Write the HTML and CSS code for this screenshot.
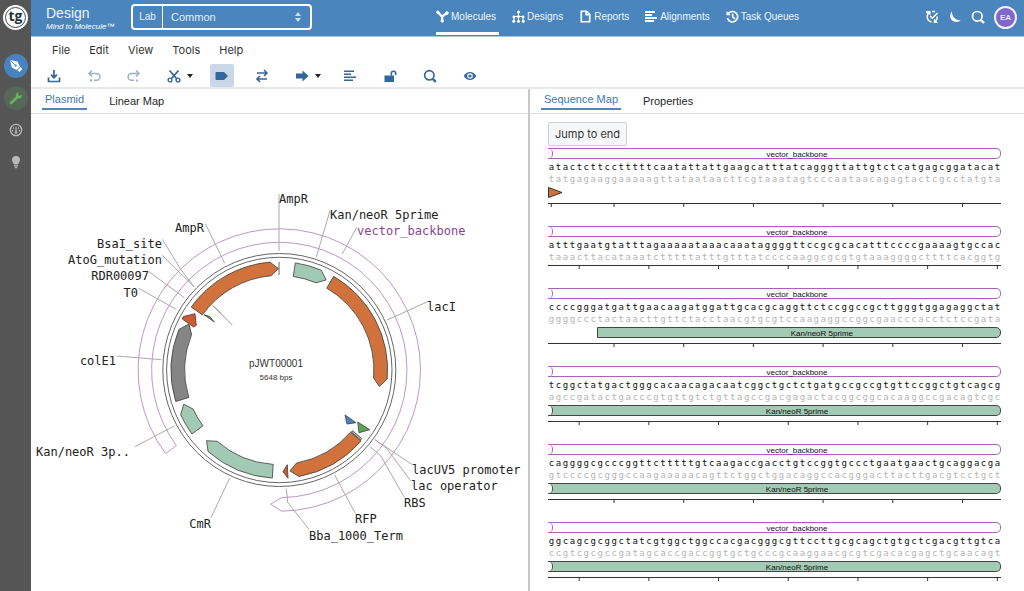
FILE: index.html
```html
<!DOCTYPE html>
<html lang="en">
<head>
<meta charset="utf-8">
<meta name="viewport" content="width=device-width, initial-scale=1">
<title>Design - pJWT00001</title>
<link rel="stylesheet" href="styles.css">
</head>
<body>
<div class="app">
  <aside class="sidebar">
    <a class="logo" href="#" aria-label="Home">tg</a>
    <a class="side-link side-design" href="#" aria-label="Design">
      <svg width="14" height="14" viewBox="0 0 14 14"><path d="M1 1l7.500 1.600 2.500 4.800-3.200 3.700L2.800 8.500z" fill="#fff"/><path d="M11.600 8l1.600 1.900-2.700 3-2-1.300z" fill="#fff"/><path d="M1.500 1.500l4.500 4.500" stroke="#4683c0" stroke-width=".9"/><circle cx="6.700" cy="6.700" r="1.100" fill="#4683c0"/></svg>
    </a>
    <a class="side-link side-build" href="#" aria-label="Build">
      <svg width="14" height="14" viewBox="0 0 14 14"><path d="M2 12L8 6.300" stroke="#67b556" stroke-width="2.600" stroke-linecap="round"/><path d="M12.700 3.400L10.600 5 8.900 3.900 9.500 1.300C7.400 1.600 6.300 3.500 7 5.500l1.800 1.900c2.400.500 4.600-1.500 3.900-4z" fill="#67b556"/></svg>
    </a>
    <a class="side-link" href="#" aria-label="Dashboard">
      <svg width="14" height="14" viewBox="0 0 14 14" fill="none" stroke="#b9b9b9"><circle cx="7" cy="7" r="5.600" stroke-width="1.400"/><path d="M7 9V4M4.600 4.500v1.200M9.400 4.500v1.200M3.600 7v1.500M10.400 7v1.500" stroke-width="1.200"/><circle cx="7" cy="9.500" r="1.300" fill="#b9b9b9" stroke="none"/></svg>
    </a>
    <a class="side-link" href="#" aria-label="Tips">
      <svg width="14" height="14" viewBox="0 0 14 14" fill="#b9b9b9"><path d="M7 1a4 4 0 0 0-4 4c0 2 1.500 2.700 1.900 4.500h4.200C9.500 7.700 11 7 11 5a4 4 0 0 0-4-4zM5 10.200h4v1.200H5zM5.500 12h3l-.7 1.200H6.200z"/></svg>
    </a>
  </aside>

  <div class="main">
    <header class="topbar">
      <div class="brand">
        <span class="brand-name">Design</span>
        <span class="brand-tag">Mind to Molecule™</span>
      </div>
      <div class="lab">
        <label class="lab-label" for="lab">Lab</label>
        <select class="lab-select" id="lab"><option>Common</option></select>
        <svg class="lab-arrows" width="8" height="10" viewBox="0 0 8 10" fill="#cfe0f0"><path d="M1 4l3-4 3 4zM1 6l3 4 3-4z"/></svg>
      </div>
      <nav class="nav">
        <a class="nav-link nav-active" href="#"><svg width="13" height="13" viewBox="0 0 13 13" fill="#fff" stroke="#fff"><path d="M2 2.500l4 4L11 3M6.200 6.500V11" stroke-width="2.200" fill="none"/><circle cx="1.900" cy="2.300" r="1.300"/><circle cx="11" cy="3" r="1.300"/><circle cx="6.200" cy="11" r="1.200"/></svg>Molecules</a>
        <a class="nav-link" href="#"><svg width="13" height="13" viewBox="0 0 13 13" fill="#fff"><path d="M6 2h1v9H6zM2 6h9v1H2zM1.500 6h1v5h-1zM10.500 6h1v5h-1z"/><circle cx="6.500" cy="2" r="1.500"/><circle cx="6.500" cy="6.500" r="1.500"/><circle cx="1.900" cy="7" r="1.400"/><circle cx="11.100" cy="7" r="1.400"/><circle cx="1.700" cy="11.200" r="1.500"/><circle cx="6.500" cy="11.200" r="1.500"/><circle cx="11.300" cy="11.200" r="1.500"/></svg>Designs</a>
        <a class="nav-link" href="#"><svg width="13" height="13" viewBox="0 0 13 13" fill="none" stroke="#fff" stroke-width="1.600"><path d="M2.300 1.200h5.200l3.200 3.200v7.400H2.300zM7.200 1.200v3.500h3.500"/></svg>Reports</a>
        <a class="nav-link" href="#"><svg width="13" height="13" viewBox="0 0 13 13" fill="#fff"><path d="M0 1h10v2H0zM0 4h7v2H0zM0 7h12v2H0zM0 10h9v2H0z"/></svg>Alignments</a>
        <a class="nav-link" href="#"><svg width="13" height="13" viewBox="0 0 13 13" fill="none" stroke="#fff" stroke-width="1.600"><path d="M2 4a5.200 5.200 0 1 1-.6 4M6.700 3.500v3.300l2.300 2"/><path d="M.5 1v4.200h4.200z" fill="#fff" stroke="none"/></svg>Task Queues</a>
      </nav>
      <div class="actions">
        <button class="action" aria-label="Refresh tasks"><svg width="14" height="14" viewBox="0 0 14 14" fill="none" stroke="#fff" stroke-width="1.500"><path d="M5 2.300A5.200 5.200 0 0 0 6.500 12M3.500 4L1 1.500M9 12a5 5 0 0 0 3-5.500M7 1.500h3M5 6l2.300 2.300L12.500 3"/><path d="M1 1h4.500v4.500zM13 13H8.500l.8-4.500z" fill="#fff" stroke="none"/></svg></button>
        <button class="action" aria-label="Dark mode"><svg width="14" height="14" viewBox="0 0 14 14" fill="#fff"><path d="M4 1.200a6.300 6.300 0 1 0 9 8.800C8.500 11.300 3.500 7 4 1.200z"/></svg></button>
        <button class="action" aria-label="Search"><svg width="14" height="14" viewBox="0 0 14 14" fill="none" stroke="#fff"><circle cx="6.300" cy="6.300" r="4.800" stroke-width="1.700"/><path d="M9.800 9.800l3.200 3.200" stroke-width="2.400"/></svg></button>
        <button class="avatar" aria-label="Account">EA</button>
      </div>
    </header>

    <div class="tools">
      <div class="menubar">
        <button class="menu">File</button><button class="menu">Edit</button><button class="menu">View</button><button class="menu">Tools</button><button class="menu">Help</button>
      </div>
      <div class="toolbar">
        <button class="tool" aria-label="Save"><svg width="14" height="14" viewBox="0 0 14 14" fill="none" stroke="#336699" stroke-width="1.700"><path d="M7 1v7M4 5.700l3 3 3-3M1.500 8.500v4h11v-4"/></svg></button>
        <button class="tool tool-off" aria-label="Undo"><svg width="14" height="14" viewBox="0 0 14 14" fill="none" stroke="#336699" stroke-width="1.500"><path d="M5 1.500L2 4.500l3 3M2.500 4.500h7a3.400 3.400 0 0 1 0 6.800H7"/><path d="M3 10.500h2v2H3z" fill="#336699" stroke="none"/></svg></button>
        <button class="tool tool-off" aria-label="Redo"><svg width="14" height="14" viewBox="0 0 14 14" fill="none" stroke="#336699" stroke-width="1.500"><path d="M9 1.500l3 3-3 3M11.500 4.500h-7a3.400 3.400 0 0 0 0 6.800H7"/><path d="M9 10.500h2v2H9z" fill="#336699" stroke="none"/></svg></button>
        <div class="tool-group">
          <button class="tool" aria-label="Cut"><svg width="14" height="14" viewBox="0 0 14 14" fill="none" stroke="#336699"><path d="M2.500 1.500l7 8M11.500 1.500l-7 8" stroke-width="1.800"/><circle cx="3" cy="11" r="1.900" stroke-width="1.400"/><circle cx="11" cy="11" r="1.900" stroke-width="1.400"/></svg></button>
          <button class="caret" aria-label="Cut options"><svg width="6" height="4" viewBox="0 0 6 4"><path d="M0 0h6L3 4z" fill="#222"/></svg></button>
        </div>
        <button class="tool tool-on" aria-label="Show features"><svg width="14" height="14" viewBox="0 0 14 14" fill="#336699"><path d="M1.500 3H9l4 4-4 4H1.500a1 1 0 0 1-1-1V4a1 1 0 0 1 1-1z"/></svg></button>
        <button class="tool" aria-label="Show translations"><svg width="14" height="14" viewBox="0 0 14 14" fill="none" stroke="#336699" stroke-width="1.600"><path d="M2 4h10M9 1l3 3-3 3M12 10H2M5 7l-3 3 3 3"/></svg></button>
        <div class="tool-group">
          <button class="tool" aria-label="Show open reading frames"><svg width="14" height="14" viewBox="0 0 14 14" fill="#336699"><path d="M1 4.500h6.500v-3L13.500 7l-6 5.500v-3H1z"/></svg></button>
          <button class="caret" aria-label="Frame options"><svg width="6" height="4" viewBox="0 0 6 4"><path d="M0 0h6L3 4z" fill="#222"/></svg></button>
        </div>
        <button class="tool" aria-label="Alignments"><svg width="14" height="14" viewBox="0 0 14 14" fill="#336699"><path d="M1 1.500h10V3H1zM1 4.500h7V6H1zM1 7.500h12V9H1zM1 10.500h9V12H1z"/></svg></button>
        <button class="tool" aria-label="Toggle read only"><svg width="14" height="14" viewBox="0 0 14 14" fill="#336699"><path d="M1.500 6.500h9.500v6.500H1.500z"/><path d="M8.300 6.500v-2a2.200 2.200 0 0 1 4.400 0V6" fill="none" stroke="#336699" stroke-width="1.600"/></svg></button>
        <button class="tool" aria-label="Find"><svg width="14" height="14" viewBox="0 0 14 14" fill="none" stroke="#336699"><circle cx="6.300" cy="6.300" r="4.700" stroke-width="1.700"/><path d="M9.800 9.800l3 3" stroke-width="2.400"/></svg></button>
        <button class="tool" aria-label="Visibility"><svg width="14" height="14" viewBox="0 0 14 14"><path d="M.8 7C3.500 1.800 10.500 1.800 13.200 7 10.500 12.200 3.500 12.200.8 7z" fill="#336699"/><circle cx="7" cy="7" r="2.800" fill="#fff"/><circle cx="7" cy="7" r="1.600" fill="#336699"/></svg></button>
      </div>
    </div>

    <div class="panels">
      <section class="panel">
        <div class="tabs">
          <button class="tab tab-active">Plasmid</button><button class="tab">Linear Map</button>
        </div>
        <div class="map">
          <svg class="plasmid" viewBox="31 114 499 477" role="img" aria-label="Plasmid map of pJWT00001">
            <g fill="none" stroke="#666"><circle cx="279.300" cy="370" r="116.500"/><circle cx="279.300" cy="370" r="112.700"/></g>
            <g id="features" stroke="#3c3c3c" stroke-width=".8">
              <path fill="#4382c4" d="M345 415l11 7.700-9 1.300z"/>
              <path fill="#5fa556" d="M357.700 422l12 7.700-10.700 3z"/>
              <path fill="#a2c9b4" d="M352.500 430.700l9.200 7.800-1 1.500-9.200-7.800z"/>
              <path fill="#cf5a30" d="M283 471.700l4.300-7 .7 13.600z"/>
              <path fill="#cf5a30" d="M182.300 319l1-2.500 11.700-2.800 1.300 11.600-2.600 1.700z"/>
              <path fill="#5fa556" d="M204 314.700l6 2 4.300 5.300z"/>
              <path fill="none" d="M279 262v13M212.700 305.300l8.300 8.400"/>
              <path fill="none" stroke="#777" d="M221 313.700l11.300 11.300"/>
            </g>
            <g class="leaders">
              <path d="M279 194v57M330 210.700L316.300 257M356.700 227.300L342.300 254M427.700 301.700L387 320M205.300 223.700l19.400 39.600M162.300 239.300l18.400 30 13.300 17.400M162.300 255.300L194 286.700M149 271.700l35.300 26M138.700 288.300l37.600 21M116.700 356l44.600 3.700M135 446.700l39.700-21M211 517.700l18.700-39.700M375 439.700l37.300 25M375 439.700l11.700 8.600 24 32.700M370 446.700l10.700 9 23.600 41.600M334.700 475l20.600 38.300M286.300 488.700l1.400 13.600 21.600 27.400"/>
            </g>
            <g class="labels">
              <text x="279" y="203">AmpR</text>
              <text x="330" y="219">Kan/neoR 5prime</text>
              <text x="357" y="235" class="label-backbone">vector_backbone</text>
              <text x="427" y="311">lacI</text>
              <text x="412" y="474">lacUV5 promoter</text>
              <text x="411" y="490">lac operator</text>
              <text x="404" y="507">RBS</text>
              <text x="355" y="523">RFP</text>
              <text x="309" y="540">Bba_1000_Term</text>
              <text x="36" y="456">Kan/neoR 3p..</text>
            </g>
            <g class="labels labels-left">
              <text x="204" y="232">AmpR</text>
              <text x="162" y="248">BsaI_site</text>
              <text x="162" y="264">AtoG_mutation</text>
              <text x="149" y="280">RDR00097</text>
              <text x="138" y="297">T0</text>
              <text x="116" y="365">colE1</text>
              <text x="211" y="528">CmR</text>
            </g>
            <text class="plasmid-name" x="276" y="367">pJWT00001</text>
            <text class="plasmid-size" x="276" y="380">5648 bps</text>
          </svg>
        </div>
      </section>
      <section class="panel">
        <div class="tabs">
          <button class="tab tab-active">Sequence Map</button><button class="tab">Properties</button>
        </div>
        <div class="sequence">
          <button class="jump">Jump to end</button>
          <div class="rows" id="rows"></div>
        </div>
      </section>
    </div>
  </div>
</div>
<script src="app.js"></script>
</body>
</html>
```

FILE: styles.css
```css
* { box-sizing: border-box; }

body {
  margin: 0;
  font-family: "Liberation Sans", Arial, sans-serif;
  font-size: 11px;
  color: #333;
  background: #fff;
}

button, select {
  font: inherit;
  color: inherit;
  background: none;
  border: 0;
  padding: 0;
  margin: 0;
}

a { color: inherit; text-decoration: none; }
svg { display: block; flex: none; }

.app { display: flex; height: 100vh; overflow: hidden; }

/* Sidebar */
.sidebar {
  flex: none;
  width: 31px;
  background: #555;
  display: flex;
  flex-direction: column;
  align-items: center;
  padding-top: 5px;
  gap: 8px;
}
.logo {
  width: 25px;
  height: 25px;
  margin-bottom: 16px;
  border-radius: 50%;
  border: 2px solid #fff;
  outline: 1px solid #34495e;
  outline-offset: -3px;
  background: #fff;
  color: #263442;
  font: bold 14px/18px "Open Sans", sans-serif;
  text-align: center;
}
.side-link {
  width: 24px;
  height: 24px;
  border-radius: 50%;
  display: flex;
  align-items: center;
  justify-content: center;
}
.side-design { background: #4683c0; }
.side-build { background: #56685a; }

/* Header */
.main { flex: 1; min-width: 0; display: flex; flex-direction: column; }
.topbar {
  flex: none;
  height: 37px;
  display: flex;
  align-items: center;
  padding: 0 7px 0 15px;
  background: #4a85bd;
  border-bottom: 1px solid #a9c5e0;
  color: #fff;
}
.brand { width: 85px; display: flex; flex-direction: column; white-space: nowrap; }
.brand-name { font-size: 14px; line-height: 17px; color: #eef5fb; }
.brand-tag { font-size: 8px; line-height: 9px; font-style: italic; }
.lab {
  position: relative;
  display: flex;
  width: 181px;
  height: 26px;
  margin-bottom: 2px;
  border: 2px solid #fff;
  border-radius: 4px;
  color: #e6f0f9;
}
.lab-label {
  width: 30px;
  border-right: 1px solid #fff;
  font-size: 10px;
  line-height: 21px;
  text-align: center;
}
.lab-select { flex: 1; appearance: none; padding-left: 8px; }
.lab-arrows { position: absolute; right: 8px; top: 6px; }
.nav { display: flex; align-self: stretch; gap: 13px; margin-left: 124px; }
.nav-link {
  display: flex;
  align-items: center;
  gap: 2px;
  padding: 0 3px 0 0;
  font-size: 10px;
  border-bottom: 3px solid transparent;
  margin-bottom: 1px;
  color: #f0f6fb;
  white-space: nowrap;
}
.nav-active { border-bottom-color: #fff; }
.actions { display: flex; align-items: center; gap: 9px; margin-left: auto; padding-bottom: 2px; }
.avatar {
  width: 23px;
  height: 23px;
  border-radius: 50%;
  border: 2px solid #f2effa;
  background: #8068c8;
  color: #e8e2fa;
  font-size: 8px;
  font-weight: bold;
}

/* Menu and toolbar */
.tools { flex: none; border-bottom: 2px solid #e9e9e9; }
.menubar {
  display: flex;
  gap: 19px;
  padding: 3px 21px 0;
  font-family: Inter, sans-serif;
  line-height: 20px;
}
.toolbar { display: flex; gap: 16px; padding: 4px 11px 0; }
.tool-group { display: flex; }
.tool {
  width: 24px;
  height: 23px;
  display: flex;
  align-items: center;
  justify-content: center;
  border-radius: 2px;
}
.tool-on { background: #c9d7e8; }
.tool-off { opacity: .5; }
.caret { width: 8px; display: flex; align-items: center; justify-content: center; }

/* Panels */
.panels { flex: 1; min-height: 0; display: grid; grid-template-columns: 499fr 494fr; }
.panel { display: flex; flex-direction: column; min-width: 0; min-height: 0; }
.panel + .panel { margin-left: -2px; border-left: 2px solid #c8c8c8; }
.tabs {
  flex: none;
  display: flex;
  gap: 19px;
  height: 25px;
  padding: 0 11px;
  border-bottom: 1px solid #ddd;
}
.tab { height: 21px; padding: 4px 3px 0; border-bottom: 2px solid transparent; line-height: 17px; color: #1f1f1f; }
.tab-active { padding-top: 2px; color: #4078ad; border-color: #5285b8; }

/* Plasmid */
.map { flex: 1; min-height: 0; }
.plasmid { width: 100%; height: 100%; }
.leaders { fill: none; stroke: #aaa; }
.labels { font: 12px "DejaVu Sans Mono", monospace; fill: #222; }
.labels-left { text-anchor: end; }
.label-backbone { fill: #8b3f96; }
.plasmid-name { font-size: 10px; text-anchor: middle; fill: #333; }
.plasmid-size { font-size: 8px; text-anchor: middle; fill: #333; }

/* Sequence */
.sequence { flex: 1; min-height: 0; overflow: hidden; padding: 8px 23px 0 18px; }
.jump {
  display: block;
  height: 24px;
  padding: 0 6px;
  margin-bottom: 2px;
  border: 1px solid #ccd0d4;
  border-radius: 2px;
  background: #f6f7f9;
  font-family: Inter, sans-serif;
}
.row { padding-bottom: 18px; }
.bar {
  position: relative;
  height: 11px;
  padding-left: 46px;
  border: 1px solid #a763b5;
  border-left: 0;
  border-radius: 0 5px 5px 0;
  font-size: 8px;
  line-height: 11px;
  text-align: center;
  color: #111;
}
.bar::before {
  content: "";
  position: absolute;
  left: 0;
  top: 0;
  width: 4px;
  height: 9px;
  border-right: 1px solid #a763b5;
  border-radius: 0 4px 4px 0 / 0 5px 5px 0;
  background: #fff;
}
.bar-green { background: #a3cab4; border-color: #444; }
.bar-green::before { border-right-color: #444; }
.bar-start { border-left: 1px solid #444; }
.bar-start::before { display: none; }
.bases {
  display: grid;
  grid-template-columns: repeat(65, 1fr);
  font: 9px/12px "DejaVu Sans Mono", monospace;
  text-align: center;
}
.bases-top { margin-top: 2px; color: #111; }
.bases-bottom { color: #b5b5b5; }
.lane { padding-top: 2px; height: 16px; }
.axis { width: 100%; height: 5px; margin-top: 2px; }
```

FILE: app.js
```js
const SVG_NS = "http://www.w3.org/2000/svg";
const CENTER = { x: 279.3, y: 370 };

function point(angle, radius) {
  const a = angle * Math.PI / 180;
  return (CENTER.x + radius * Math.sin(a)).toFixed(2) + " " + (CENTER.y - radius * Math.cos(a)).toFixed(2);
}

/* Curved arrow: flat tail at `tail`, shoulders at `neck`, point at `tip`. */
function arrowPath(tail, neck, tip, inner, outer) {
  const clockwise = neck > tail ? 1 : 0;
  const large = Math.abs(neck - tail) > 180 ? 1 : 0;
  return "M" + point(tail, outer) +
    "A" + outer + " " + outer + " 0 " + large + " " + clockwise + " " + point(neck, outer) +
    "L" + point(tip, (inner + outer) / 2) + "L" + point(neck, inner) +
    "A" + inner + " " + inner + " 0 " + large + " " + (1 - clockwise) + " " + point(tail, inner) + "Z";
}

const features = [
  [-54.4, -5, -0.5, "#d1713c"],
  [8.5, 22.8, 27.5, "#a2c9b4"],
  [30.1, 94.8, 99.4, "#d1713c"],
  [131, 169.5, 174, "#d1713c"],
  [183.7, 221.1, 225.8, "#a2c9b4"],
  [233.8, 245.6, 250.3, "#a2c9b4"],
  [253.1, 292, 297, "#858585"]
];

const layer = document.getElementById("features");
function addArrow(d, fill, stroke) {
  const path = document.createElementNS(SVG_NS, "path");
  path.setAttribute("d", d);
  path.setAttribute("fill", fill);
  if (stroke) path.setAttribute("stroke", stroke);
  layer.appendChild(path);
}
features.forEach(([tail, neck, tip, fill]) => addArrow(arrowPath(tail, neck, tip, 94.6, 108.3), fill));
addArrow(arrowPath(-126.3, 179, 183.7, 127.7, 141.2), "none", "#b07abb");

const BASES = 65;
const PAIRS = { a: "t", t: "a", g: "c", c: "g" };
const rows = [
  { seq: "atactcttcctttttcaatattattgaagcatttatcagggttattgtctcatgagcggatacat", lane: "arrow", ticks: [0, 9, 19, 29, 39, 49, 59] },
  { seq: "atttgaatgtatttagaaaaataaacaaataggggttccgcgcacatttccccgaaaagtgccac", ticks: [4, 14, 24, 34, 44, 54, 64] },
  { seq: "ccccgggatgattgaacaagatggattgcacgcaggttctccggccgcttgggtggagaggctat", lane: "start", from: 7, ticks: [9, 19, 29, 39, 49, 59] },
  { seq: "tcggctatgactgggcacaacagacaatcggctgctctgatgccgccgtgttccggctgtcagcg", lane: "full", ticks: [4, 14, 24, 34, 44, 54, 64] },
  { seq: "caggggcgcccggttctttttgtcaagaccgacctgtccggtgccctgaatgaactgcaggacga", lane: "full", ticks: [9, 19, 29, 39, 49, 59] },
  { seq: "ggcagcgcggctatcgtggctggccacgacgggcgttccttgcgcagctgtgctcgacgttgtca", lane: "full", ticks: [4, 14, 24, 34, 44, 54, 64] }
];

const cells = s => [...s].map(b => "<span>" + b + "</span>").join("");

function lane(row) {
  if (!row.lane) return "";
  if (row.lane === "arrow") {
    return '<div class="lane"><svg width="15" height="11" viewBox="0 0 15 11"><path d="M.5.5L14 5.500.5 10.500z" fill="#d1713c" stroke="#333"/></svg></div>';
  }
  if (row.lane === "start") {
    return '<div class="lane"><div class="bar bar-green bar-start" style="margin-left:' + (row.from / BASES * 100) + '%">Kan/neoR 5prime</div></div>';
  }
  return '<div class="lane"><div class="bar bar-green">Kan/neoR 5prime</div></div>';
}

document.getElementById("rows").innerHTML = rows.map(row =>
  '<div class="row"><div class="bar">vector_backbone</div>' +
  '<div class="bases bases-top">' + cells(row.seq) + "</div>" +
  '<div class="bases bases-bottom">' + cells([...row.seq].map(b => PAIRS[b]).join("")) + "</div>" +
  lane(row) +
  '<svg class="axis"><rect width="100%" height="1" fill="#333"/>' +
  row.ticks.map(t => '<rect x="' + ((t + 0.4) / BASES * 100) + '%" width="1" height="4" fill="#333"/>').join("") +
  "</svg></div>"
).join("");
```
